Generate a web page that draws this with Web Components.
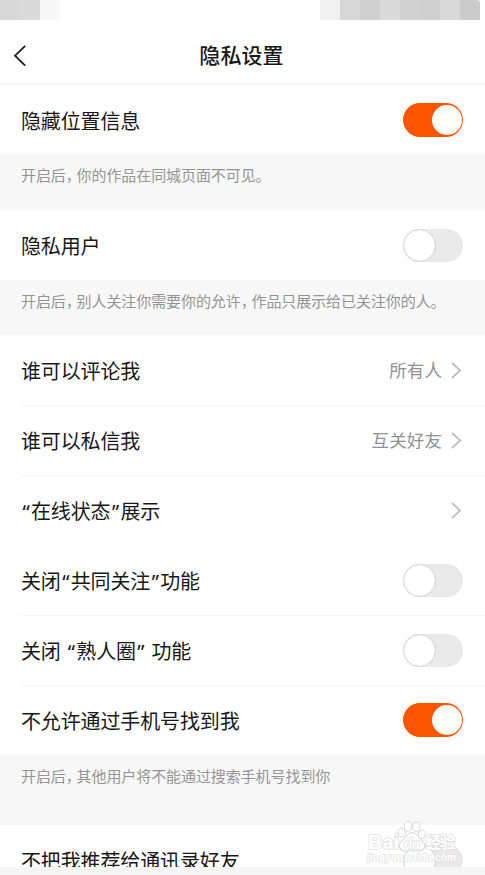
<!DOCTYPE html>
<html lang="zh-CN">
<head>
<meta charset="utf-8">
<title>隐私设置</title>
<style>
html,body{margin:0;padding:0;background:#fff}
body{width:485px;height:875px;overflow:hidden;font-family:"Noto Sans CJK SC",sans-serif;color:#181818}
</style>
</head>
<body>
<privacy-page></privacy-page>
<script>
function define(name, html){
  const t=document.createElement('template');
  t.innerHTML=html;
  customElements.define(name,class extends HTMLElement{
    connectedCallback(){
      if(this.shadowRoot)return;
      this.attachShadow({mode:'open'}).append(t.content.cloneNode(true));
    }
  });
}

define('status-mosaic',`<style>
:host{display:flex;height:20px;width:485px}
i{width:20px;height:20px;flex:none;background:var(--c)}
.gap{width:260px}
i:last-child{border-top-right-radius:3px}
</style>
<i style="--c:#d7d7d7"></i><i style="--c:#dadada"></i><i style="--c:#f7f7f7"></i><i class="gap"></i>
<i style="--c:#f1f1f1"></i><i style="--c:#d7d7d7"></i><i style="--c:#cfcfcf"></i><i style="--c:#dadada"></i><i style="--c:#d1d1d1"></i><i style="--c:#cfcfcf"></i><i style="--c:#d9d9d9"></i><i style="--c:#cbcbcb"></i>`);

define('nav-bar',`<style>
:host{display:grid;grid-template-columns:40px 1fr 42px;align-items:start;height:63px;box-sizing:border-box;padding-top:19px}
svg{display:block;margin:6px 0 0 13px}
h1{margin:0;font-size:21px;line-height:30px;font-weight:500;text-align:center;letter-spacing:.1px}
</style>
<svg width="14" height="22" viewBox="0 0 14 22" fill="none" stroke="#1b1b1b" stroke-width="1.8"><path d="M12.2 .8 L2 10.7 L12.2 20.6"/></svg>
<h1><slot></slot></h1>`);

define('toggle-switch',`<style>
:host{display:block;width:60px;height:33px;box-sizing:border-box;border-radius:17px;background:#e9e9e9;padding:0;flex:none}
b{display:block;width:33px;height:33px;box-sizing:border-box;border-radius:50%;background:#fff;border:1px solid #d2d2d2}
:host([on]){height:34px;background:#fe5500;padding:2px 1.5px}
:host([on]) b{width:30px;height:30px;border:0;margin-left:auto;background:#fffffc}
</style><b></b>`);

define('chevron-icon',`<style>:host{display:block;width:11px;height:17px;flex:none;padding-right:1px}svg{display:block}</style>
<svg width="11" height="17" viewBox="0 0 11 17" fill="none" stroke="#bdbdbd" stroke-width="1.7"><path d="M1 1 L9.2 8.5 L1 16"/></svg>`);

define('curly-quote',`<style>:host{display:inline-block;width:10px;font-family:"Noto Sans",sans-serif;letter-spacing:0;line-height:20px;text-align:center}</style><slot></slot>`);

define('setting-row',`<style>
:host{display:flex;align-items:center;justify-content:space-between;height:70px;box-sizing:border-box;padding:0 22px 0 21px;background:#fff}
:host([ruled]){background:linear-gradient(#f6f6f6,#f6f6f6) 20px 0/465px 1px no-repeat #fff}
.label{font-size:20px;line-height:30px;letter-spacing:-.13px;word-spacing:1.2px;white-space:pre;padding-top:1px}
.end{display:flex;align-items:center;gap:9px;font-size:17.6px;line-height:28px;color:#929292}
</style><div class="label"><slot></slot></div><div class="end"><slot name="end"></slot></div>`);

define('setting-hint',`<style>
:host{display:block;box-sizing:border-box;height:55px;padding:10px 21px 0;background:#f7f7f7;color:#959595;font-size:15px;line-height:22px;letter-spacing:-.08px;white-space:nowrap}
</style><slot></slot>`);

define('hint-comma',`<style>:host{letter-spacing:-4.2px}</style><slot></slot>`);

define('page-watermark',`<style>
:host{position:absolute;left:366px;top:818px;width:96px;height:50px;pointer-events:none}
svg{display:block;overflow:visible}
text{font-family:"Liberation Sans","Noto Sans CJK SC",sans-serif;font-weight:bold;fill:#fff;stroke:#dedede;stroke-width:1.5;paint-order:stroke}
</style>
<svg width="96" height="50" viewBox="0 0 96 50">
<g fill="#fff" stroke="#dcdcdc" stroke-width="1.1">
<ellipse cx="35.5" cy="14.5" rx="3.7" ry="4.4" transform="rotate(-15 35.5 14.5)"/>
<ellipse cx="42" cy="8.3" rx="3.7" ry="4.9"/>
<ellipse cx="50.3" cy="8.8" rx="3.6" ry="4.7" transform="rotate(8 50.3 8.8)"/>
<ellipse cx="55.9" cy="16.2" rx="3.5" ry="4.3" transform="rotate(15 55.9 16.2)"/>
<path d="M46 14.5 C41 14.5 40 20 35.8 23 C31.5 27 33.5 33 39 33 H53 C58.5 33 60.5 27 56.5 23 C52.5 20 51 14.5 46 14.5Z"/>
</g>
<text x="2" y="31" font-size="20" textLength="31">Bai</text>
<text x="38" y="30.5" font-size="14" textLength="16">du</text>
<text x="59.5" y="30" font-size="15.5" textLength="30">经验</text>
<text x="1" y="43" font-size="10.5" textLength="89" style="stroke-width:1">jingyan.baidu.com</text>
</svg>`);

define('privacy-page',`<style>
:host{display:block;position:relative;width:485px;height:875px;overflow:hidden;background:#fff}
main{display:block;border-top:2px solid #f6f6f6}
.first{height:69px;padding-top:1px}
.h1{height:56px}
.h3{height:70px}
.cut{height:42px;overflow:hidden}
footer{height:8px;background:#f5f5f5}
</style>
<status-mosaic></status-mosaic>
<nav-bar>隐私设置</nav-bar>
<main>
<setting-row class="first">隐藏位置信息<toggle-switch on slot="end"></toggle-switch></setting-row>
<setting-hint class="h1">开启后<hint-comma>，</hint-comma>你的作品在同城页面不可见。</setting-hint>
<setting-row>隐私用户<toggle-switch slot="end"></toggle-switch></setting-row>
<setting-hint>开启后<hint-comma>，</hint-comma>别人关注你需要你的允许<hint-comma>，</hint-comma>作品只展示给已关注你的人。</setting-hint>
<setting-row>谁可以评论我<span slot="end">所有人</span><chevron-icon slot="end"></chevron-icon></setting-row>
<setting-row ruled>谁可以私信我<span slot="end">互关好友</span><chevron-icon slot="end"></chevron-icon></setting-row>
<setting-row ruled><curly-quote>“</curly-quote>在线状态<curly-quote>”</curly-quote>展示<chevron-icon slot="end"></chevron-icon></setting-row>
<setting-row>关闭<curly-quote>“</curly-quote>共同关注<curly-quote>”</curly-quote>功能<toggle-switch slot="end"></toggle-switch></setting-row>
<setting-row ruled>关闭 <curly-quote>“</curly-quote>熟人圈<curly-quote>”</curly-quote> 功能<toggle-switch slot="end"></toggle-switch></setting-row>
<setting-row ruled>不允许通过手机号找到我<toggle-switch on slot="end"></toggle-switch></setting-row>
<setting-hint class="h3">开启后<hint-comma>，</hint-comma>其他用户将不能通过搜索手机号找到你</setting-hint>
<div class="cut"><setting-row>不把我推荐给通讯录好友<toggle-switch slot="end"></toggle-switch></setting-row></div>
</main>
<footer></footer>
<page-watermark></page-watermark>`);
</script>
</body>
</html>
